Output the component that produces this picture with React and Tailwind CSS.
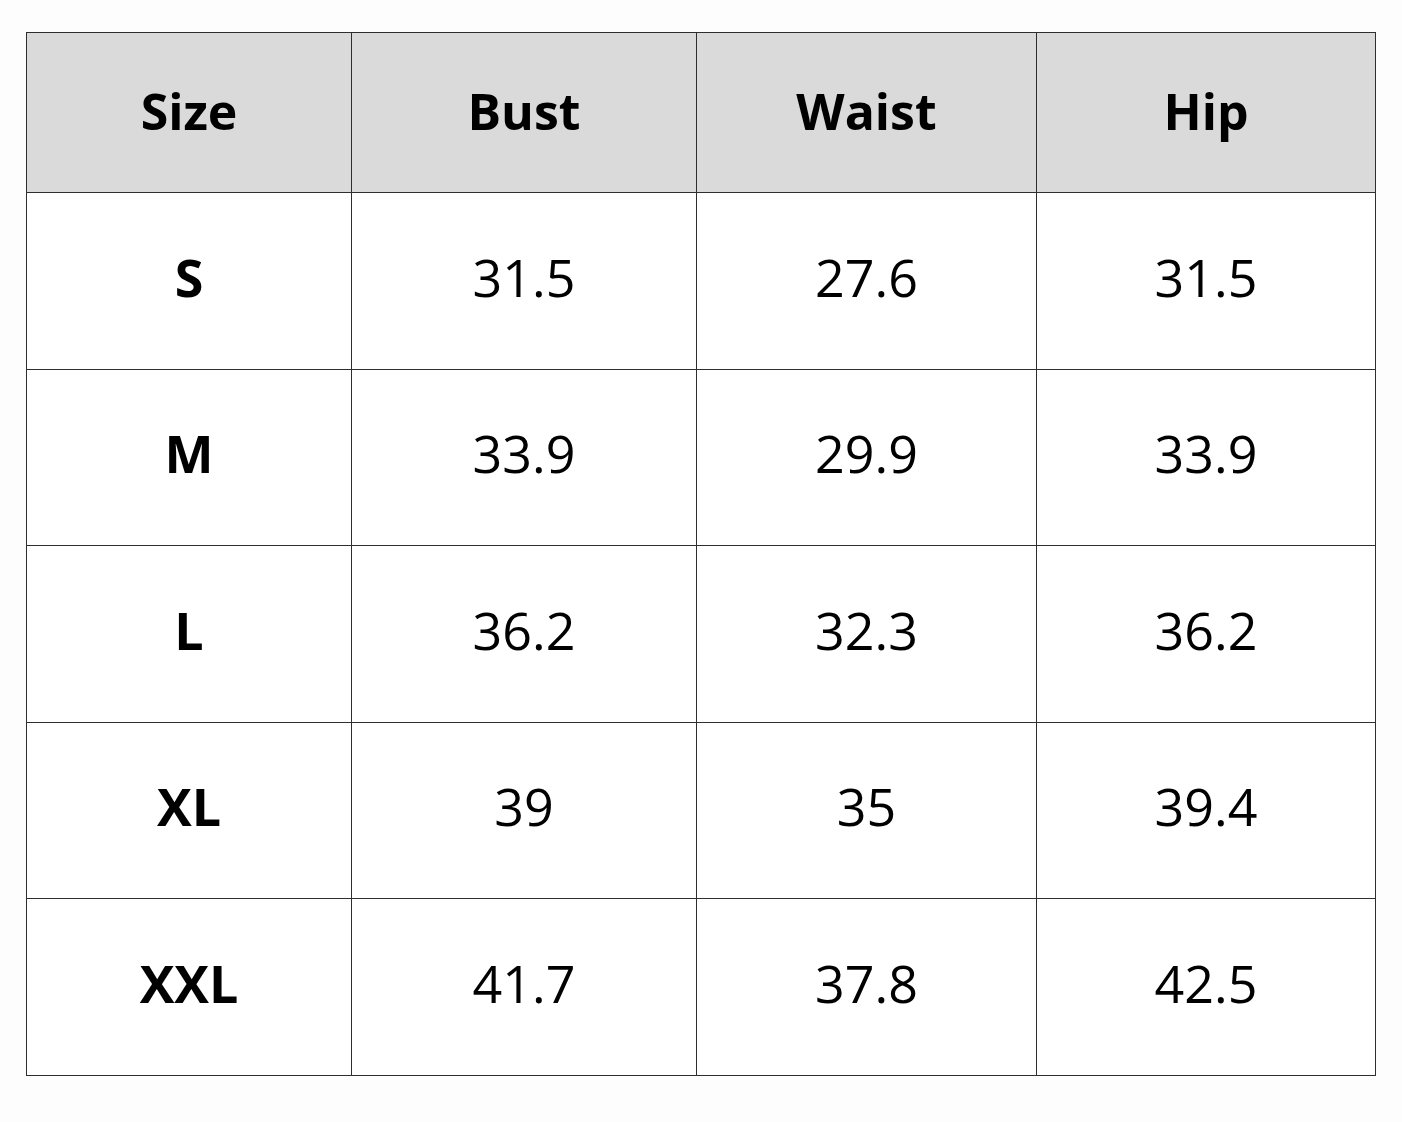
const HEADERS = ['Size', 'Bust', 'Waist', 'Hip'];

const ROWS = [
  ['S', '31.5', '27.6', '31.5'],
  ['M', '33.9', '29.9', '33.9'],
  ['L', '36.2', '32.3', '36.2'],
  ['XL', '39', '35', '39.4'],
  ['XXL', '41.7', '37.8', '42.5'],
];

const WIDTHS = ['w-[325px]', 'w-[345px]', 'w-[340px]', 'w-[339px]'];

export default function App() {
  return (
    <div className="w-[1402px] h-[1122px] bg-[#fdfdfd] pt-[32px] pl-[26px]" style={{ fontFamily: '"Open Sans", "Liberation Sans", sans-serif' }}>
      <table className="border-collapse text-black table-fixed">
        <thead>
          <tr className="h-[160px] bg-[#dadada]">
            {HEADERS.map((h, i) => (
              <th key={h} className={`${WIDTHS[i]} border-[1.5px] border-[#2e2e2e] text-[50px] font-bold text-center align-middle p-0 pb-[2px]`}>
                {h}
              </th>
            ))}
          </tr>
        </thead>
        <tbody>
          {ROWS.map(row => (
            <tr key={row[0]} className="h-[176.5px] bg-white">
              {row.map((cell, i) => (
                <td key={i} className={`border-[1.5px] border-[#2e2e2e] text-[52px] text-center align-middle p-0 pb-[8px] ${i === 0 ? 'font-bold' : 'font-medium'}`}>
                  {cell}
                </td>
              ))}
            </tr>
          ))}
        </tbody>
      </table>
    </div>
  );
}
